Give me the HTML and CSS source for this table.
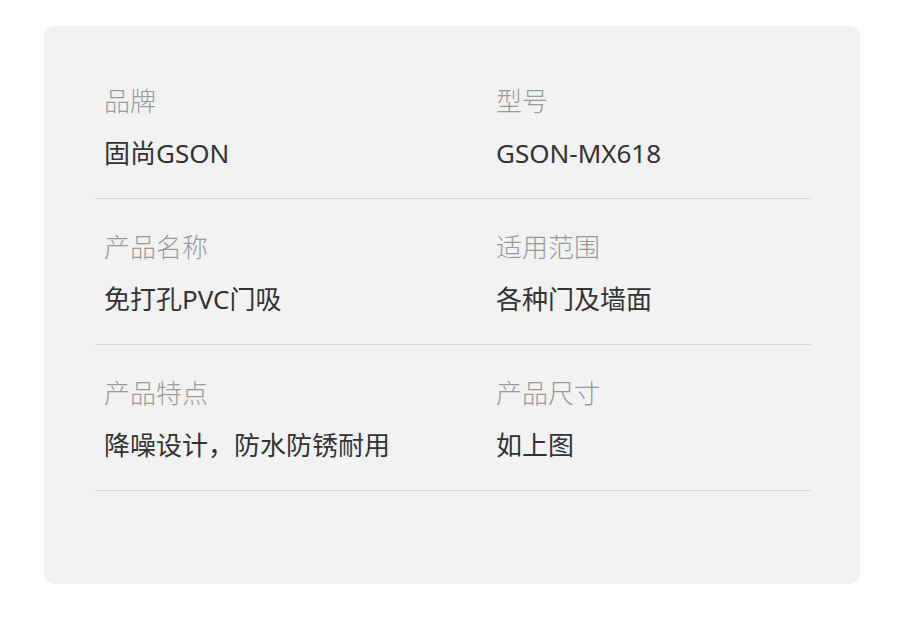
FILE: index.html
```html
<!DOCTYPE html>
<html lang="zh-CN">
<head>
  <meta charset="UTF-8">
  <title>商品参数</title>
  <link rel="stylesheet" href="styles.css">
</head>
<body>
  <div class="spec-card">
    <div class="spec-row">
      <div class="spec-item">
        <div class="spec-label">品牌</div>
        <div class="spec-value">固尚GSON</div>
      </div>
      <div class="spec-item">
        <div class="spec-label">型号</div>
        <div class="spec-value">GSON-MX618</div>
      </div>
    </div>
    <div class="spec-row">
      <div class="spec-item">
        <div class="spec-label">产品名称</div>
        <div class="spec-value">免打孔PVC门吸</div>
      </div>
      <div class="spec-item">
        <div class="spec-label">适用范围</div>
        <div class="spec-value">各种门及墙面</div>
      </div>
    </div>
    <div class="spec-row">
      <div class="spec-item">
        <div class="spec-label">产品特点</div>
        <div class="spec-value">降噪设计，防水防锈耐用</div>
      </div>
      <div class="spec-item">
        <div class="spec-label">产品尺寸</div>
        <div class="spec-value">如上图</div>
      </div>
    </div>
  </div>
</body>
</html>
```

FILE: styles.css
```css
body {
  margin: 0;
  background: #fff;
  font-family: "Noto Sans", "Noto Sans CJK SC", sans-serif;
}

.spec-card {
  width: 816px;
  box-sizing: border-box;
  margin: 26px 0 0 44px;
  padding: 27px 49px 93px 51px;
  background: #f2f2f2;
  border-radius: 10px;
}

.spec-row {
  display: grid;
  grid-template-columns: 392px 1fr;
  padding: 30px 9px 27px;
  border-bottom: 1px solid #dadada;
}

.spec-label {
  font-size: 26px;
  font-weight: 300;
  line-height: 36px;
  color: #9a9a9a;
}

.spec-value {
  margin-top: 16px;
  font-size: 26px;
  line-height: 36px;
  color: #333;
}
```
